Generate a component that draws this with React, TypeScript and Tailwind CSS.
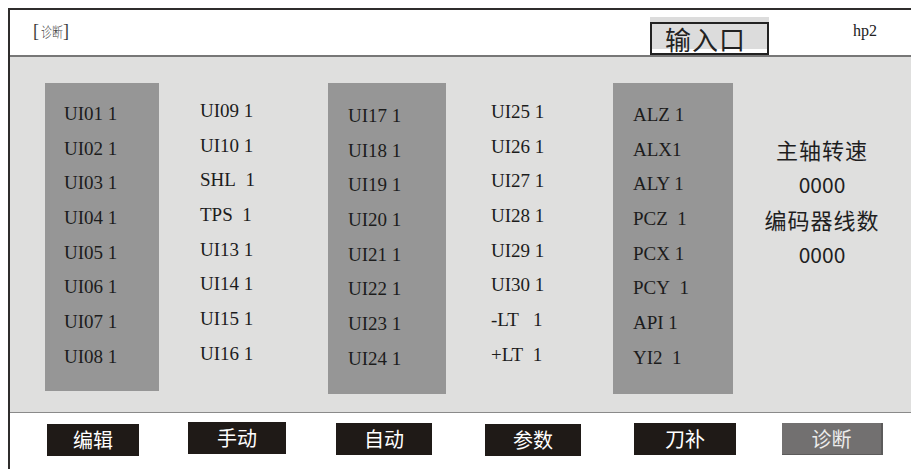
const serif = "font-['Liberation_Serif','Times_New_Roman',serif]";
const cjk = "font-['Noto_Sans_CJK_SC','Noto_Sans',sans-serif]";

const col1 = ['UI01 1', 'UI02 1', 'UI03 1', 'UI04 1', 'UI05 1', 'UI06 1', 'UI07 1', 'UI08 1'];
const col2 = ['UI09 1', 'UI10 1', 'SHL\u00a0\u00a01', 'TPS\u00a0\u00a01', 'UI13 1', 'UI14 1', 'UI15 1', 'UI16 1'];
const col3 = ['UI17 1', 'UI18 1', 'UI19 1', 'UI20 1', 'UI21 1', 'UI22 1', 'UI23 1', 'UI24 1'];
const col4 = ['UI25 1', 'UI26 1', 'UI27 1', 'UI28 1', 'UI29 1', 'UI30 1', '-LT\u00a0\u00a0\u00a01', '+LT\u00a0\u00a01'];
const col5 = ['ALZ 1', 'ALX1', 'ALY 1', 'PCZ\u00a0 1', 'PCX 1', 'PCY\u00a0 1', 'API 1', 'YI2\u00a0\u00a01'];

function Column({ items }: { items: string[] }) {
	return (
		<div className={`${serif} text-[19px] text-[#1c1c1c]`}>
			{items.map((t) => (
				<div key={t} className="h-[34.7px] leading-[34.7px] whitespace-pre">
					{t}
				</div>
			))}
		</div>
	);
}

const buttons = [
	{ label: '编辑', cls: 'ml-[37px] mt-[11px] w-[92px]' },
	{ label: '手动', cls: 'ml-[49px] mt-[9px] w-[98px]' },
	{ label: '自动', cls: 'ml-[50px] mt-[10px] w-[96px]' },
	{ label: '参数', cls: 'ml-[53px] mt-[11px] w-[96px]' },
	{ label: '刀补', cls: 'ml-[53px] mt-[10px] w-[102px]' },
];

export default function App() {
	return (
		<div className="w-[911px] h-[469px] bg-white overflow-hidden">
			<div className="mt-[8px] ml-[8px] h-[461px] border-l-2 border-t-2 border-[#2f2d2c] flex flex-col">
				{/* header */}
				<div className="h-[47px] flex items-center border-b-2 border-[#777] shrink-0">
					<div className="pl-[23px] flex items-center text-[#3a3a3a] -mt-[2px]">
						<span className={`${serif} text-[18px]`}>[</span>
						<span className={`${cjk} text-[14px] font-light inline-block w-[22px] scale-x-[0.78] origin-left whitespace-nowrap ml-[2px]`}>
							诊断
						</span>
						<span className={`${serif} text-[18px]`}>]</span>
					</div>
					<div className="flex-1" />
					<div className="self-end mr-[84px] bg-[#dcdcdc] pt-[5px]">
						<div
							className={`${cjk} w-[119px] h-[33px] border-2 border-[#222] bg-[linear-gradient(to_bottom,#dcdcdc_85%,#ffffff_85%)] text-[26px] leading-[29px] text-[#222] pl-[13px] tracking-[1px]`}
						>
							输入口
						</div>
					</div>
					<div className={`${serif} w-[58px] text-[16px] text-[#222] -mt-[4px]`}>hp2</div>
				</div>

				{/* body */}
				<div className="h-[356px] bg-[#dfdfde] border-b border-[#8a8a8a] flex items-start pt-[26px] shrink-0">
					<div className="ml-[35px] w-[114px] h-[308px] bg-[#969696] pl-[19px] pt-[14px]">
						<Column items={col1} />
					</div>
					<div className="ml-[41px] w-[128px] pt-[11px]">
						<Column items={col2} />
					</div>
					<div className="w-[118px] h-[311px] bg-[#969696] pl-[20px] pt-[16px]">
						<Column items={col3} />
					</div>
					<div className="ml-[45px] w-[122px] pt-[12px]">
						<Column items={col4} />
					</div>
					<div className="w-[120px] h-[311px] bg-[#969696] pl-[20px] pt-[15px]">
						<Column items={col5} />
					</div>
					<div className={`${cjk} flex-1 text-center text-[#1e1e1e] pt-[49px]`}>
						<div className="h-[35px] leading-[35px] text-[22px] tracking-[1px]">主轴转速</div>
						<div className="h-[35px] leading-[35px] text-[21px]">0000</div>
						<div className="h-[35px] leading-[35px] text-[22px] tracking-[1px]">编码器线数</div>
						<div className="h-[35px] leading-[35px] text-[21px]">0000</div>
					</div>
				</div>

				{/* footer */}
				<div className={`${cjk} flex-1 flex items-start text-[20px] text-white`}>
					{buttons.map((b) => (
						<div key={b.label} className={`${b.cls} h-[32px] leading-[32px] bg-[#1f1a17] text-center`}>
							{b.label}
						</div>
					))}
					<div className="ml-[46px] mt-[10px] w-[101px] h-[32px] leading-[31px] bg-[#727070] border-r-2 border-b border-[#5c5b5b] text-center text-[#ececec]">
						诊断
					</div>
				</div>
			</div>
		</div>
	);
}
